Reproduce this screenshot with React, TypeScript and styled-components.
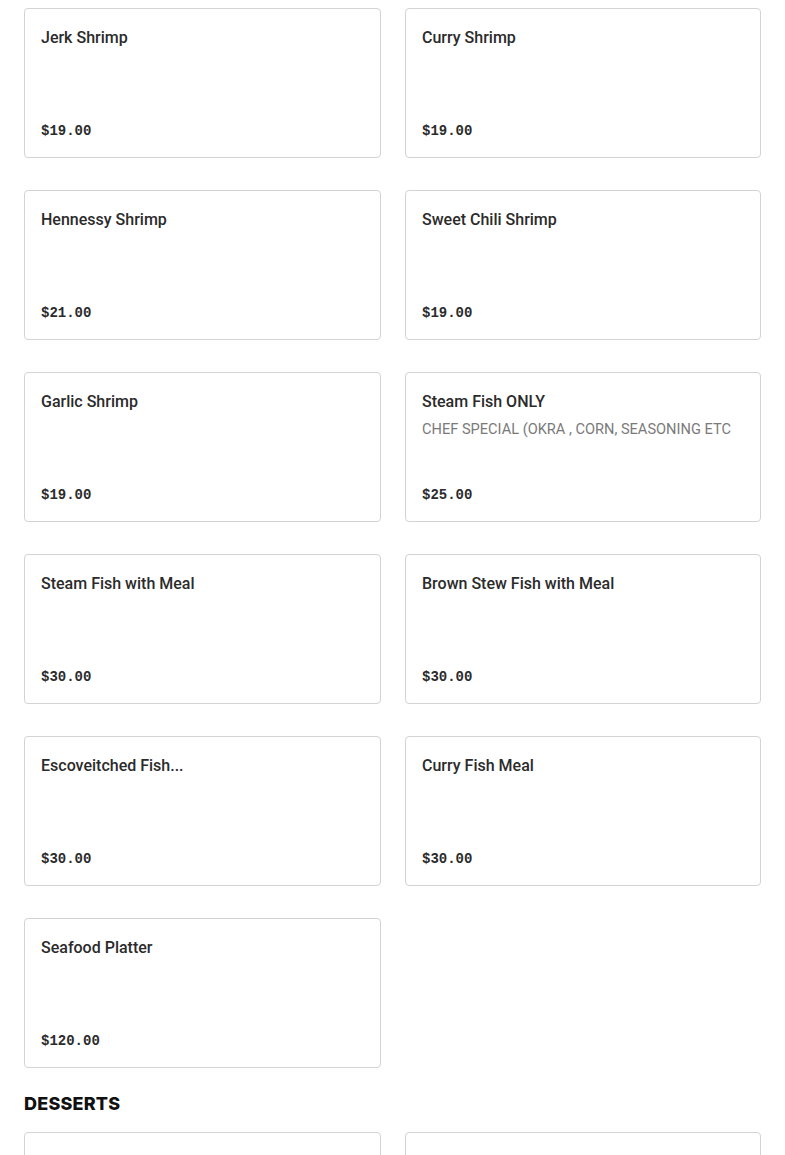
import React from "react";
import styled, { createGlobalStyle } from "styled-components";

const Global = createGlobalStyle`
  html, body { margin: 0; padding: 0; background: #ffffff; }
  body { font-family: Roboto, "Liberation Sans", sans-serif; color: #2b2b2b; }
`;

const Page = styled.div`
  padding: 8px 24px 0;
  display: flex;
  flex-direction: column;
`;

const Grid = styled.div`
  display: grid;
  grid-template-columns: 357px 356px;
  column-gap: 24px;
  row-gap: 32px;
`;

const Card = styled.div<{ $faded?: boolean }>`
  box-sizing: border-box;
  height: 150px;
  border: 1px solid #d3d3d3;
  border-radius: 4px;
  padding: 19px 16px 16px;
  display: flex;
  flex-direction: column;
  color: ${(p) => (p.$faded ? "#ececec" : "#2b2b2b")};
`;

const Title = styled.div`
  font-family: Roboto, "Liberation Sans", sans-serif;
  font-weight: 500;
  font-size: 16px;
  line-height: 20px;
  color: inherit;
  white-space: nowrap;
  overflow: hidden;
  text-overflow: ellipsis;
`;

const Desc = styled.div`
  margin-top: 8px;
  font-family: Roboto, "Liberation Sans", sans-serif;
  font-size: 14.6px;
  line-height: 18px;
  color: #7a7a7a;
  text-transform: uppercase;
  white-space: nowrap;
  overflow: hidden;
`;

const Price = styled.div`
  margin-top: auto;
  font-family: "Liberation Mono", "DejaVu Sans Mono", monospace;
  font-weight: 700;
  font-size: 14px;
  line-height: 20px;
  color: inherit;
`;

const Section = styled.h2`
  margin: 24px 0 16px;
  font-family: Inter, "Liberation Sans", sans-serif;
  font-weight: 800;
  font-size: 18px;
  line-height: 24px;
  color: #111;
  letter-spacing: 0.2px;
`;

type Item = { name: string; price: string; desc?: string };

const items: Item[] = [
  { name: "Jerk Shrimp", price: "$19.00" },
  { name: "Curry Shrimp", price: "$19.00" },
  { name: "Hennessy Shrimp", price: "$21.00" },
  { name: "Sweet Chili Shrimp", price: "$19.00" },
  { name: "Garlic Shrimp", price: "$19.00" },
  { name: "Steam Fish ONLY", price: "$25.00", desc: "Chef special (okra , corn, seasoning etc" },
  { name: "Steam Fish with Meal", price: "$30.00" },
  { name: "Brown Stew Fish with Meal", price: "$30.00" },
  { name: "Escoveitched Fish...", price: "$30.00" },
  { name: "Curry Fish Meal", price: "$30.00" },
  { name: "Seafood Platter", price: "$120.00" },
];

const desserts: Item[] = [
  { name: "Carrot Cake", price: "$8.00" },
  { name: "Rum Cake", price: "$8.00" },
];

const MenuCard = ({ item, faded }: { item: Item; faded?: boolean }) => (
  <Card $faded={faded}>
    <Title>{item.name}</Title>
    {item.desc && <Desc>{item.desc}</Desc>}
    <Price>{item.price}</Price>
  </Card>
);

export default function App() {
  return (
    <Page>
      <Global />
      <Grid>
        {items.map((it) => (
          <MenuCard key={it.name} item={it} />
        ))}
      </Grid>
      <Section>DESSERTS</Section>
      <Grid>
        {desserts.map((it) => (
          <MenuCard key={it.name} item={it} faded />
        ))}
      </Grid>
    </Page>
  );
}
